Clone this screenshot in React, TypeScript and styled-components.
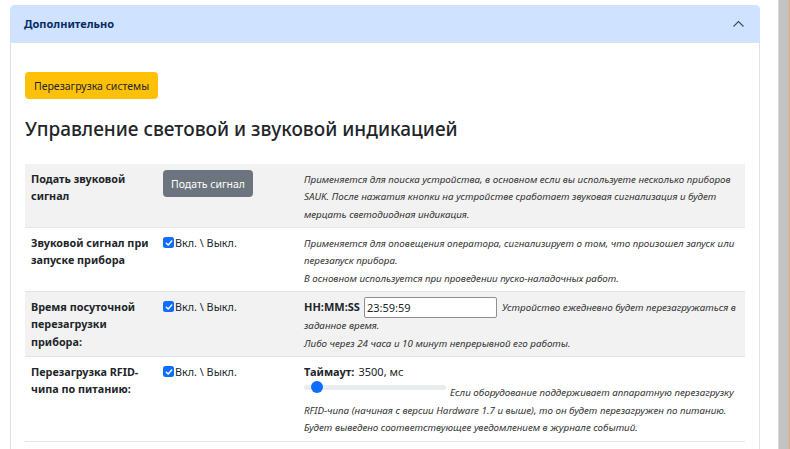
import React from "react";
import styled, { createGlobalStyle } from "styled-components";

const GlobalStyle = createGlobalStyle`
  html, body { margin: 0; padding: 0; background: #fff; overflow: hidden; }
  body { font-family: "Noto Sans", "Open Sans", sans-serif; color: #212529; }
  * { box-sizing: border-box; }
`;

const Page = styled.div`
  display: flex;
  width: 790px;
  height: 449px;
`;

const Main = styled.div`
  flex: 1;
  padding: 5px 18px 0 10px;
  overflow: hidden;
`;

const ScrollStrip = styled.div`
  width: 12px;
  background: #c3c3c3;
  border-left: 1px solid #d8d8d8;
  border-right: 1px solid #e6a872;
`;

const Card = styled.div`
  border: 1px solid #dee2e6;
  border-top: none;
  border-radius: 5px 5px 0 0;
  height: 460px;
`;

const Header = styled.div`
  height: 38px;
  background: #cfe2ff;
  border-radius: 5px 5px 0 0;
  box-shadow: inset 0 -1px 0 #dee2e6;
  display: flex;
  align-items: center;
  justify-content: space-between;
  padding: 0 15px 1px 14px;
  margin: 0 -1px;
`;

const HeaderTitle = styled.span`
  font-size: 11px;
  font-weight: 700;
  color: #052c65;
`;

const Body = styled.div`
  padding: 29px 14px 0 14px;
`;

const WarnButton = styled.button`
  height: 27px;
  padding: 0 9px;
  border: none;
  border-radius: 4px;
  background: #ffc107;
  color: #212529;
  font-family: inherit;
  font-size: 10.5px;
`;

const Title = styled.h2`
  margin: 19px 0 23px 0;
  font-size: 19px;
  font-weight: 500;
  line-height: 23px;
  color: #212529;
`;

const Table = styled.table`
  width: 100%;
  border-collapse: collapse;
  font-size: 11px;
  line-height: 17.5px;
`;

const Row = styled.tr<{ $striped?: boolean }>`
  background: ${(p) => (p.$striped ? "#f2f2f2" : "#fff")};
  border-bottom: 1px solid #e3e5e8;
`;

const Cell = styled.td<{ $w?: number }>`
  vertical-align: top;
  padding: 5.5px 6px 5px 6px;
  ${(p) => (p.$w ? `width: ${p.$w}px;` : "")}
`;

const Label = styled.div`
  font-weight: 700;
  font-size: 10.8px;
  color: #212529;
`;

const Desc = styled.span`
  font-style: italic;
  font-size: 9.8px;
  line-height: 15px;
  color: #333;
`;

const GrayButton = styled.button`
  height: 27px;
  padding: 0 8px;
  border: none;
  border-radius: 4px;
  background: #6c757d;
  color: #fff;
  font-family: inherit;
  font-size: 10.5px;
  margin-top: 0.5px;
`;

const CheckLabel = styled.label`
  display: inline-flex;
  align-items: center;
  gap: 1px;
  font-size: 10.8px;
`;

const CheckBox = styled.span`
  width: 11px;
  height: 11px;
  border-radius: 2.5px;
  background: #0d6efd;
  display: inline-flex;
  align-items: center;
  justify-content: center;
`;

const Strong = styled.b`
  font-weight: 700;
  margin-right: 4px;
`;

const TimeInput = styled.input`
  width: 133px;
  height: 21px;
  margin: -2px 5px -2px 0;
  padding: 0 2px;
  border: 1px solid #8f8f8f;
  border-radius: 2px;
  font-family: inherit;
  font-size: 11px;
  color: #212529;
  vertical-align: middle;
`;

const Range = styled.input`
  -webkit-appearance: none;
  appearance: none;
  width: 142px;
  height: 14px;
  margin: 0 4px 0 0;
  background: transparent;
  vertical-align: 2px;
  &::-webkit-slider-runnable-track {
    height: 5px;
    background: #e9ecef;
    border-radius: 3px;
  }
  &::-webkit-slider-thumb {
    -webkit-appearance: none;
    width: 12px;
    height: 12px;
    margin-top: -3.5px;
    border-radius: 50%;
    background: #0d6efd;
    border: none;
  }
`;

const Check = () => (
  <CheckBox>
    <svg width="8" height="8" viewBox="0 0 8 8">
      <path d="M1.3 4.2 L3.2 6 L6.7 2" fill="none" stroke="#fff" strokeWidth="1.4" strokeLinecap="round" strokeLinejoin="round" />
    </svg>
  </CheckBox>
);

const Toggle = () => (
  <CheckLabel>
    <Check />
    Вкл. \ Выкл.
  </CheckLabel>
);

export default function App() {
  return (
    <>
      <GlobalStyle />
      <Page>
        <Main>
          <Card>
            <Header>
              <HeaderTitle>Дополнительно</HeaderTitle>
              <svg width="13" height="8" viewBox="0 0 13 8">
                <path d="M1.5 6.5 L6.5 1.5 L11.5 6.5" fill="none" stroke="#3a4a68" strokeWidth="1.1" />
              </svg>
            </Header>
            <Body>
              <WarnButton>Перезагрузка системы</WarnButton>
              <Title>Управление световой и звуковой индикацией</Title>
              <Table>
                <tbody>
                  <Row $striped>
                    <Cell $w={132}>
                      <Label>Подать звуковой<br />сигнал</Label>
                    </Cell>
                    <Cell $w={141}>
                      <GrayButton>Подать сигнал</GrayButton>
                    </Cell>
                    <Cell>
                      <Desc>
                        Применяется для поиска устройства, в основном если вы используете несколько приборов SAUK. После нажатия кнопки на устройстве сработает звуковая сигнализация и будет мерцать светодиодная индикация.
                      </Desc>
                    </Cell>
                  </Row>
                  <Row>
                    <Cell>
                      <Label>Звуковой сигнал при<br />запуске прибора</Label>
                    </Cell>
                    <Cell>
                      <Toggle />
                    </Cell>
                    <Cell>
                      <Desc>
                        Применяется для оповещения оператора, сигнализирует о том, что произошел запуск или перезапуск прибора.
                        <br />
                        В основном используется при проведении пуско-наладочных работ.
                      </Desc>
                    </Cell>
                  </Row>
                  <Row $striped>
                    <Cell>
                      <Label>Время посуточной<br />перезагрузки<br />прибора:</Label>
                    </Cell>
                    <Cell>
                      <Toggle />
                    </Cell>
                    <Cell>
                      <Strong>HH:MM:SS</Strong>
                      <TimeInput defaultValue="23:59:59" />
                      <Desc>
                        Устройство ежедневно будет перезагружаться в заданное время.
                        <br />
                        Либо через 24 часа и 10 минут непрерывной его работы.
                      </Desc>
                    </Cell>
                  </Row>
                  <Row>
                    <Cell>
                      <Label>Перезагрузка RFID-<br />чипа по питанию:</Label>
                    </Cell>
                    <Cell>
                      <Toggle />
                    </Cell>
                    <Cell>
                      <div>
                        <Strong>Таймаут:</Strong>3500, мс
                      </div>
                      <Range type="range" min={2500} max={20000} defaultValue={3500} />
                      <Desc>
                        Если оборудование поддерживает аппаратную перезагрузку RFID-чипа (начиная с версии Hardware 1.7 и выше), то он будет перезагружен по питанию.
                        <br />
                        Будет выведено соответствующее уведомлением в журнале событий.
                      </Desc>
                    </Cell>
                  </Row>
                </tbody>
              </Table>
            </Body>
          </Card>
        </Main>
        <ScrollStrip />
      </Page>
    </>
  );
}
